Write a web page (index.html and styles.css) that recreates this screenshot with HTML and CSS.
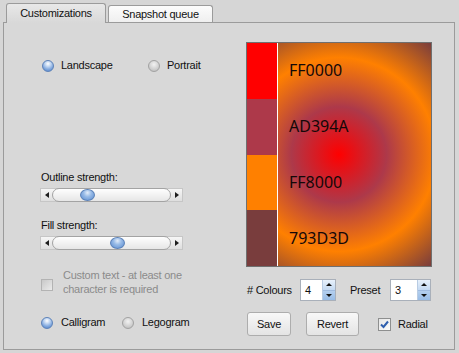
FILE: index.html
```html
<!DOCTYPE HTML>
<html>
<head>
<meta charset="utf-8">
<title>Customizations</title>
<link rel="stylesheet" href="styles.css">
</head>

<body>
<div id="tabs">
	<div class="tab active">Customizations</div>
	<div class="tab idle">Snapshot queue</div>
</div>
<div id="panel">
	<div id="left">
		<div class="options orient">
			<div class="radio first"><span class="dot on"></span>Landscape</div>
			<div class="radio"><span class="dot"></span>Portrait</div>
		</div>

		<div class="caption outline">Outline strength:</div>
		<div class="slider">
			<span class="arrow"><i class="tri-left"></i></span>
			<span class="groove"><span class="thumb" style="left:27px"></span></span>
			<span class="arrow"><i class="tri-right"></i></span>
		</div>

		<div class="caption fill">Fill strength:</div>
		<div class="slider">
			<span class="arrow"><i class="tri-left"></i></span>
			<span class="groove"><span class="thumb" style="left:57px"></span></span>
			<span class="arrow"><i class="tri-right"></i></span>
		</div>

		<div class="note">
			<span class="box"></span>
			<span>Custom text - at least one<br>character is required</span>
		</div>

		<div class="options style">
			<div class="radio first"><span class="dot on"></span>Calligram</div>
			<div class="radio"><span class="dot"></span>Legogram</div>
		</div>
	</div>

	<div id="right">
		<div class="swatches">
			<div class="chips">
				<div style="background:#FF0000"></div>
				<div style="background:#AD394A"></div>
				<div style="background:#FF8000"></div>
				<div style="background:#793D3D"></div>
			</div>
			<div class="names">
				<div>FF0000</div>
				<div>AD394A</div>
				<div>FF8000</div>
				<div>793D3D</div>
			</div>
		</div>

		<div class="spinrow">
			<span class="spin-label">#&nbsp;Colours</span>
			<div class="spinbox narrow">
				<span class="val">4</span>
				<span class="btns"><span class="up"><i></i></span><span class="down"><i></i></span></span>
			</div>
			<span class="spin-label preset">Preset</span>
			<div class="spinbox wide">
				<span class="val">3</span>
				<span class="btns"><span class="up"><i></i></span><span class="down"><i></i></span></span>
			</div>
		</div>

		<div class="btnrow">
			<div class="btn save">Save</div>
			<div class="btn revert">Revert</div>
			<span class="check">
				<svg width="11" height="11" viewBox="0 0 11 11"><path d="M2 5.5 L4.5 8 L9 2.5" fill="none" stroke="#2f5fae" stroke-width="2"/></svg>
			</span>
			<span class="check-label">Radial</span>
		</div>
	</div>
</div>
</body>
</html>
```

FILE: styles.css
```css
body {
	margin: 0px;
	padding: 0px;
	width: 459px;
	height: 353px;
	overflow: hidden;
	background: #d6d6d6;
	color: #111;
	font-family: "Liberation Sans", Arial, sans-serif;
	font-size: 11px;
	line-height: 13px;
	letter-spacing: -0.25px;
}

/* tab bar */
#tabs {
	display: flex;
	align-items: flex-end;
	height: 22px;
	padding-left: 6px;
}
.tab {
	box-sizing: border-box;
	border: 1px solid #9b9b9b;
	border-bottom: none;
	border-radius: 3px 3px 0px 0px;
	text-align: center;
}
.tab.active {
	width: 100px;
	height: 20px;
	padding-top: 3px;
	margin-bottom: -1px;
	background: linear-gradient(#e8e8e8, #d8d8d8);
	position: relative;
	z-index: 1;
}
.tab.idle {
	width: 105px;
	height: 17px;
	padding-top: 2px;
	margin-left: 2px;
	background: linear-gradient(#fcfcfc, #efefef);
}

#panel {
	box-sizing: border-box;
	width: 452px;
	height: 328px;
	margin-left: 3px;
	border: 1px solid #9b9b9b;
	background: #d8d8d8;
	display: flex;
}

/* left column */
#left {
	box-sizing: border-box;
	width: 242px;
	padding-left: 36px;
	display: flex;
	flex-direction: column;
	align-items: flex-start;
}
.options {
	display: flex;
	height: 13px;
}
.options.orient {
	margin-top: 36px;
	margin-left: 2px;
}
.options.orient .first {
	width: 106px;
}
.options.style {
	margin-top: 20px;
	margin-left: 1px;
}
.options.style .first {
	width: 81px;
}
.options.style .radio {
	gap: 8px;
}
.radio {
	display: flex;
	align-items: center;
	gap: 7px;
}
.dot {
	box-sizing: border-box;
	width: 12px;
	height: 12px;
	border-radius: 50%;
	border: 1px solid #a2a2a2;
	background: radial-gradient(circle at 50% 35%, #f2f2f2 0%, #d2d2d2 55%, #b5b5b5 100%);
}
.dot.on {
	border-color: #5d82b8;
	background: radial-gradient(circle at 50% 28%, #ffffff 0%, #c4d8f2 30%, #7ea6dd 65%, #4e7dc3 100%);
}

.caption {
	margin-left: 1px;
}
.caption.outline {
	margin-top: 99px;
}
.caption.fill {
	margin-top: 17px;
}

.slider {
	box-sizing: border-box;
	display: flex;
	width: 143px;
	height: 14px;
	margin-top: 4px;
	border: 1px solid #c6c6c6;
	background: linear-gradient(#f6f6f6, #dedede);
}
.arrow {
	width: 11px;
	display: flex;
	align-items: center;
	justify-content: center;
}
.tri-left {
	border-right: 4px solid #1e1e1e;
	border-top: 3px solid transparent;
	border-bottom: 3px solid transparent;
}
.tri-right {
	border-left: 4px solid #1e1e1e;
	border-top: 3px solid transparent;
	border-bottom: 3px solid transparent;
}
.groove {
	flex: 1;
	margin: -1px 0px;
	border: 1px solid #a3a3a3;
	border-radius: 7px;
	background: linear-gradient(#fefefe, #e6e6e6);
	position: relative;
}
.thumb {
	box-sizing: border-box;
	position: absolute;
	top: 0px;
	width: 15px;
	height: 12px;
	border-radius: 50%;
	border: 1px solid #5a80b7;
	background: radial-gradient(circle at 50% 28%, #e2ecf9 0%, #98bbe7 40%, #5a8bd0 100%);
}

.note {
	display: flex;
	gap: 10px;
	margin-top: 18px;
	margin-left: 1px;
	line-height: 14px;
	color: #8b8b8b;
}
.box {
	box-sizing: border-box;
	width: 12px;
	height: 12px;
	margin-top: 11px;
	border: 1px solid #b3b3b3;
	background: linear-gradient(135deg, #c8c8c8, #ebebeb);
}

/* right column */
#right {
	width: 186px;
	margin-top: 19px;
	display: flex;
	flex-direction: column;
}
.swatches {
	box-sizing: border-box;
	height: 225px;
	border: 1px solid #6f6f6f;
	display: flex;
	background: radial-gradient(circle farthest-corner at 50% 50%, #ff0000 0%, #ad394a 33%, #ff8000 67%, #793d3d 100%);
}
.chips {
	width: 30px;
	border-right: 1px solid #ffffff;
	display: flex;
	flex-direction: column;
}
.chips div {
	flex: 1;
}
.names {
	flex: 1;
	display: flex;
	flex-direction: column;
}
.names div {
	flex: 1;
	display: flex;
	align-items: center;
	padding-left: 11px;
	font-family: "Noto Sans", sans-serif;
	font-size: 16px;
	letter-spacing: 0px;
	color: #140808;
}

.spinrow {
	display: flex;
	align-items: center;
	height: 22px;
	margin-top: 12px;
}
.spin-label {
	box-sizing: border-box;
	width: 54px;
	padding-left: 1px;
}
.spin-label.preset {
	width: 40px;
	margin-left: 14px;
	padding-left: 0px;
}
.spinbox {
	box-sizing: border-box;
	height: 22px;
	border: 1px solid #a9b0ba;
	background: #ffffff;
	display: flex;
}
.spinbox.narrow {
	width: 36px;
}
.spinbox.wide {
	width: 41px;
}
.val {
	flex: 1;
	padding-left: 4px;
	line-height: 20px;
}
.btns {
	width: 12px;
	display: flex;
	flex-direction: column;
	border-left: 1px solid #b9cce3;
}
.btns span {
	flex: 1;
	display: flex;
	align-items: center;
	justify-content: center;
}
.btns .up {
	background: linear-gradient(#e8f1fb, #c3d9f2);
	border-bottom: 1px solid #9fbbe0;
}
.btns .down {
	background: linear-gradient(#b4cfee, #98bce6);
}
.up i {
	border-bottom: 3px solid #111;
	border-left: 3px solid transparent;
	border-right: 3px solid transparent;
}
.down i {
	border-top: 3px solid #111;
	border-left: 3px solid transparent;
	border-right: 3px solid transparent;
}

.btnrow {
	display: flex;
	align-items: center;
	height: 24px;
	margin-top: 11px;
}
.btn {
	box-sizing: border-box;
	height: 24px;
	border: 1px solid #adadad;
	border-radius: 3px;
	background: linear-gradient(#f8f8f8, #e4e4e4);
	display: flex;
	align-items: center;
	justify-content: center;
}
.btn.save {
	width: 44px;
	margin-left: 1px;
}
.btn.revert {
	width: 53px;
	margin-left: 15px;
}
.check {
	box-sizing: border-box;
	width: 13px;
	height: 13px;
	margin-left: 19px;
	border: 1px solid #8e8f8f;
	background: linear-gradient(135deg, #e6e6e6, #fbfbfb);
	display: flex;
	align-items: center;
	justify-content: center;
}
.check-label {
	margin-left: 7px;
}
```
